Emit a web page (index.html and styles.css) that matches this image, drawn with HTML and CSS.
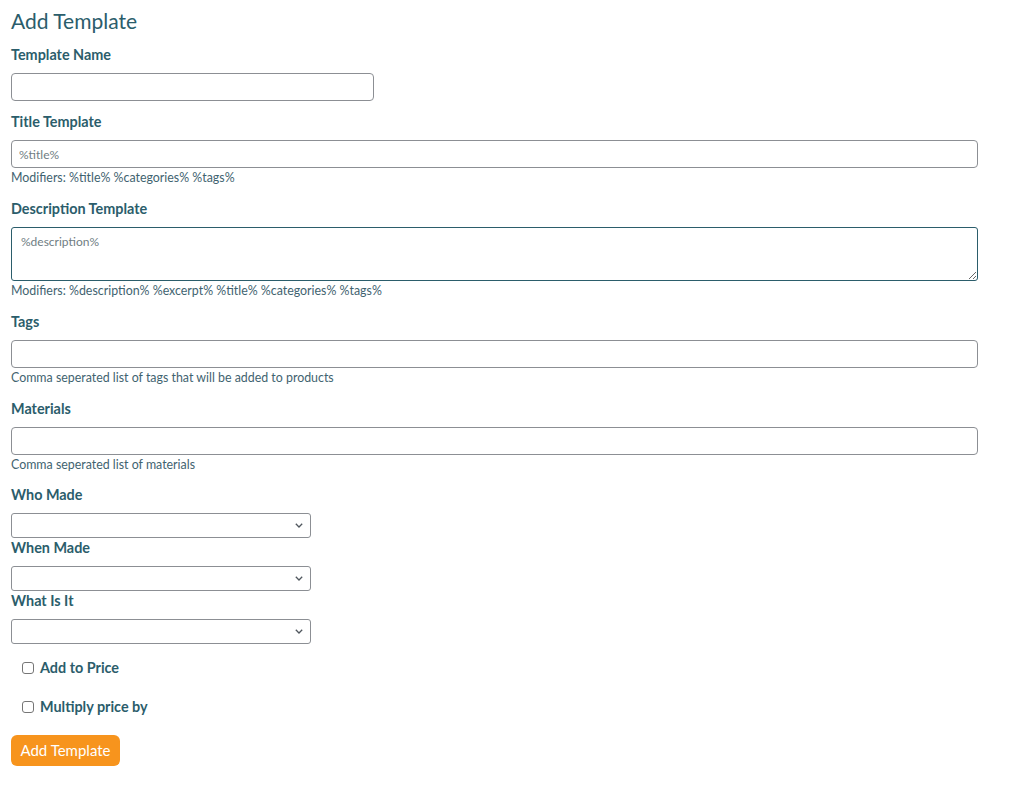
FILE: index.html
```html
<!DOCTYPE html>
<html lang="en">
<head>
<meta charset="utf-8">
<title>Add Template</title>
<link rel="stylesheet" href="styles.css">
</head>
<body>
<div class="wrap">
  <h1 class="page-title">Add Template</h1>
  <form class="tpl-form">
    <div class="field">
      <label class="field-label" for="name">Template Name</label>
      <input class="text-input short" id="name" type="text">
    </div>
    <div class="field">
      <label class="field-label" for="title">Title Template</label>
      <input class="text-input" id="title" type="text" value="%title%">
      <p class="help">Modifiers: %title% %categories% %tags%</p>
    </div>
    <div class="field">
      <label class="field-label" for="desc">Description Template</label>
      <textarea class="text-area" id="desc">%description%</textarea>
      <p class="help">Modifiers: %description% %excerpt% %title% %categories% %tags%</p>
    </div>
    <div class="field">
      <label class="field-label" for="tags">Tags</label>
      <input class="text-input" id="tags" type="text">
      <p class="help">Comma seperated list of tags that will be added to products</p>
    </div>
    <div class="field field-tight">
      <label class="field-label" for="materials">Materials</label>
      <input class="text-input" id="materials" type="text">
      <p class="help">Comma seperated list of materials</p>
    </div>
    <div class="field select-field">
      <label class="field-label" for="who">Who Made</label>
      <div class="select-wrap">
        <select class="select" id="who"><option></option></select>
        <svg class="chev" width="8" height="5" viewBox="0 0 8 5"><path d="M0.8 0.8 L4 4 L7.2 0.8" fill="none" stroke="#50575e" stroke-width="1.3"/></svg>
      </div>
    </div>
    <div class="field select-field">
      <label class="field-label" for="when">When Made</label>
      <div class="select-wrap">
        <select class="select" id="when"><option></option></select>
        <svg class="chev" width="8" height="5" viewBox="0 0 8 5"><path d="M0.8 0.8 L4 4 L7.2 0.8" fill="none" stroke="#50575e" stroke-width="1.3"/></svg>
      </div>
    </div>
    <div class="field select-field">
      <label class="field-label" for="what">What Is It</label>
      <div class="select-wrap">
        <select class="select" id="what"><option></option></select>
        <svg class="chev" width="8" height="5" viewBox="0 0 8 5"><path d="M0.8 0.8 L4 4 L7.2 0.8" fill="none" stroke="#50575e" stroke-width="1.3"/></svg>
      </div>
    </div>
    <div class="checks">
      <label class="check"><span class="box"></span><span class="check-text">Add to Price</span></label>
      <label class="check"><span class="box"></span><span class="check-text">Multiply price by</span></label>
    </div>
    <button class="btn" type="button">Add Template</button>
  </form>
</div>
</body>
</html>
```

FILE: styles.css
```css
html, body {
  margin: 0;
  padding: 0;
  background: #ffffff;
}

body {
  font-family: Lato, "Liberation Sans", Arial, sans-serif;
  color: #2b5d6b;
}

.wrap {
  padding: 8px 11px 20px 11px;
  width: 967px;
}

.page-title {
  margin: 0 0 11px 0;
  font-size: 21px;
  line-height: 26px;
  font-weight: 400;
  color: #2b5d6b;
}

.tpl-form {
  display: flex;
  flex-direction: column;
}

.field {
  display: flex;
  flex-direction: column;
  align-items: flex-start;
  margin-bottom: 11px;
}

.field-tight {
  margin-bottom: 10px;
}

.select-field {
  margin-bottom: 0;
}

.field-label {
  font-size: 14.4px;
  line-height: 20px;
  font-weight: 700;
  color: #2b5d6b;
  margin-bottom: 8px;
}

.text-input {
  box-sizing: border-box;
  width: 967px;
  height: 28px;
  margin: 0;
  padding: 0 7px;
  border: 1px solid #8c8f94;
  border-radius: 4px;
  font-family: inherit;
  font-size: 12px;
  color: #6f7d83;
  background: #fff;
}

.text-input.short {
  width: 363px;
}

.text-area {
  box-sizing: border-box;
  width: 967px;
  height: 54px;
  margin: 0;
  padding: 6px 9px;
  border: 1px solid #2b5d6b;
  border-radius: 3px;
  font-family: inherit;
  font-size: 12px;
  color: #6f7d83;
  background: #fff;
  resize: vertical;
}

.help {
  margin: 0;
  font-size: 12.4px;
  line-height: 20px;
  color: #3f6370;
}

.select-wrap {
  position: relative;
  width: 300px;
  height: 25px;
}

.select {
  box-sizing: border-box;
  width: 300px;
  height: 25px;
  margin: 0;
  border: 1px solid #8c8f94;
  border-radius: 3px;
  background: #fff;
  appearance: none;
  -webkit-appearance: none;
}

.chev {
  position: absolute;
  right: 8px;
  top: 10px;
  pointer-events: none;
}

.checks {
  display: flex;
  flex-direction: column;
  gap: 20px;
  padding: 14px 0 0 11px;
}

.check {
  display: flex;
  align-items: center;
  gap: 6px;
  height: 19px;
}

.box {
  box-sizing: border-box;
  width: 12px;
  height: 12px;
  border: 1px solid #767676;
  border-radius: 3px;
  background: #fff;
}

.check-text {
  font-size: 14.4px;
  font-weight: 700;
  color: #2b5d6b;
}

.btn {
  align-self: flex-start;
  margin-top: 19px;
  width: 109px;
  height: 31px;
  padding: 0;
  border: none;
  border-radius: 6px;
  background: #f7941d;
  color: #ffffff;
  font-family: inherit;
  font-size: 15px;
  line-height: 31px;
  cursor: pointer;
}
```
